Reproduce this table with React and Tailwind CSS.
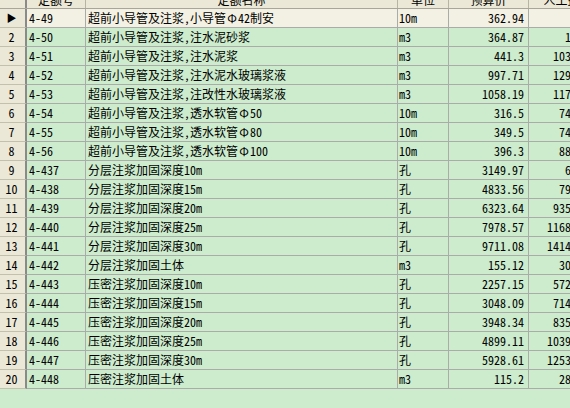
import React from 'react'

const rows = [
  ['4-49', '超前小导管及注浆,小导管Φ42制安', '10m', '362.94', ''],
  ['4-50', '超前小导管及注浆,注水泥砂浆', 'm3', '364.87', '1.47'],
  ['4-51', '超前小导管及注浆,注水泥浆', 'm3', '441.3', '103.07'],
  ['4-52', '超前小导管及注浆,注水泥水玻璃浆液', 'm3', '997.71', '129.49'],
  ['4-53', '超前小导管及注浆,注改性水玻璃浆液', 'm3', '1058.19', '117.59'],
  ['4-54', '超前小导管及注浆,透水软管Φ50', '10m', '316.5', '74.65'],
  ['4-55', '超前小导管及注浆,透水软管Φ80', '10m', '349.5', '74.65'],
  ['4-56', '超前小导管及注浆,透水软管Φ100', '10m', '396.3', '88.28'],
  ['4-437', '分层注浆加固深度10m', '孔', '3149.97', '6.21'],
  ['4-438', '分层注浆加固深度15m', '孔', '4833.56', '79.34'],
  ['4-439', '分层注浆加固深度20m', '孔', '6323.64', '935.03'],
  ['4-440', '分层注浆加固深度25m', '孔', '7978.57', '1168.72'],
  ['4-441', '分层注浆加固深度30m', '孔', '9711.08', '1414.68'],
  ['4-442', '分层注浆加固土体', 'm3', '155.12', '30.63'],
  ['4-443', '压密注浆加固深度10m', '孔', '2257.15', '572.78'],
  ['4-444', '压密注浆加固深度15m', '孔', '3048.09', '714.33'],
  ['4-445', '压密注浆加固深度20m', '孔', '3948.34', '835.88'],
  ['4-446', '压密注浆加固深度25m', '孔', '4899.11', '1039.51'],
  ['4-447', '压密注浆加固深度30m', '孔', '5928.61', '1253.16'],
  ['4-448', '压密注浆加固土体', 'm3', '115.2', '28.91'],
]

const cols = 'grid grid-cols-[27px_59px_312px_51px_80px_65px]'

// Φ is drawn full width in the original font
function Name({ text }) {
  const parts = text.split('Φ')
  return (
    <>
      {parts.map((p, i) => (
        <React.Fragment key={i}>
          {i > 0 && <span className="inline-block w-[12px] text-center">Φ</span>}
          {p}
        </React.Fragment>
      ))}
    </>
  )
}

function App() {
  return (
    <div
      className="w-[570px] h-[408px] overflow-hidden bg-[#cdeccd] text-[12px] leading-none text-black"
      style={{ fontFamily: '"Noto Sans Mono CJK SC", "Noto Sans CJK SC", monospace' }}
    >
      <div className="w-[594px]">
        {/* header, top half is scrolled out of view */}
        <div className={`${cols} h-[18px] -mt-[9px] bg-[#ebe8d7] border-b border-[#a9a599]`}>
          <div className="border-r-2 border-[#8a8a8a]" />
          <div className="flex items-center justify-center border-r border-[#b8b4a4]">定额号</div>
          <div className="flex items-center justify-center border-r border-[#b8b4a4]">定额名称</div>
          <div className="flex items-center justify-center border-r border-[#b8b4a4]">单位</div>
          <div className="flex items-center justify-center border-r border-[#b8b4a4]">预算价</div>
          <div className="flex items-center justify-center">人工费</div>
        </div>

        {rows.map((r, i) => {
          const sel = i === 0
          return (
            <div
              key={i}
              className={`${cols} h-[19px] ${sel ? 'bg-[#f3f1e3]' : 'bg-[#cdeccd]'}`}
            >
              <div className="flex items-center justify-center pr-[2px] bg-[#ebe8d7] border-r-2 border-b border-r-[#8a8a8a] border-b-[#c4c0ae]">
                {sel ? <span className="text-[10px]">▶</span> : i + 1}
              </div>
              <div className="flex items-center pl-[2px] border-r border-b border-[#a9aca9]">{r[0]}</div>
              <div className="flex items-center pl-[2px] border-r border-b border-[#a9aca9] whitespace-nowrap">
                <Name text={r[1]} />
              </div>
              <div className="flex items-center pl-[1px] border-r border-b border-[#a9aca9]">{r[2]}</div>
              <div className="flex items-center justify-end pr-[4px] border-r border-b border-[#a9aca9]">{r[3]}</div>
              <div className="flex items-center justify-end pr-[4px] border-r border-b border-[#a9aca9]">{r[4]}</div>
            </div>
          )
        })}
      </div>
    </div>
  )
}

export default App
